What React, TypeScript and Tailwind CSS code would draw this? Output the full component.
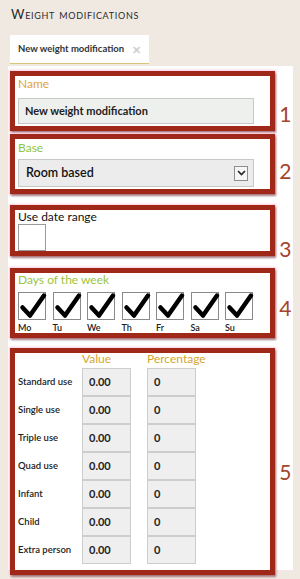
import React from "react";

const boxCls =
  "border-[5px] border-[#a02818] shadow-[1px_2px_2px_rgba(60,0,0,0.45),0_0_2px_1px_#ffc9dc] bg-white";

function Num({ n, mt }: { n: string; mt: string }) {
  return (
    <div className={`w-[14px] ml-[4px] text-[21px] leading-[24px] text-[#a5432c] ${mt}`} style={{ fontFamily: "Lato, sans-serif" }}>
      {n}
    </div>
  );
}

function Check() {
  return (
    <div className="relative w-[28px] h-[28px] border border-[#8a8a8a] bg-white">
      <svg className="absolute left-0 top-0 overflow-visible" width="28" height="28" viewBox="0 0 28 28">
        <path d="M3.5 14.5 L11 22.5 L25 2.5" fill="none" stroke="#000" strokeWidth="4.5" strokeLinecap="round" strokeLinejoin="round" />
      </svg>
    </div>
  );
}

const days = ["Mo", "Tu", "We", "Th", "Fr", "Sa", "Su"];
const rows = ["Standard use", "Single use", "Triple use", "Quad use", "Infant", "Child", "Extra person"];

export default function App() {
  return (
    <div className="w-[300px] h-[579px] bg-[#efe9e2] overflow-hidden" style={{ fontFamily: "Lato, 'Open Sans', sans-serif" }}>
      <div className="pl-[11px] pt-[7px] h-[35px] text-[13px] leading-[14px] text-[#2a2a2a] [font-variant:small-caps] tracking-[0.7px]">
        Weight modifications
      </div>
      <div className="ml-[10px] w-[139px] h-[29px] bg-white border-b border-[#dcc27a] flex items-center pl-[8px] pr-[8px] justify-between">
        <span className="text-[9.5px] font-bold text-[#333]">New weight modification</span>
        <span className="text-[11px] font-bold text-[#d0d0d0] leading-none">✕</span>
      </div>
      <div className="ml-[8px] mt-[2px] w-[285px] h-[504px] bg-white pl-[2px] pt-[5px] flex flex-col">
        {/* Box 1 */}
        <div className="flex items-start">
          <div className={`${boxCls} w-[268px] h-[60px] pl-[3px] pt-[0px]`}>
            <div className="text-[12px] leading-[16px] text-[#e2a23a]">Name</div>
            <div className="mt-[6px] w-[236px] h-[26px] bg-[#eef0ee] border border-[#c8c8c8] flex items-center pl-[6px] text-[11px] font-bold text-[#222]">
              New weight modification
            </div>
          </div>
          <Num n="1" mt="mt-[31px]" />
        </div>
        {/* Box 2 */}
        <div className="flex items-start mt-[3px]">
          <div className={`${boxCls} w-[268px] h-[60px] pl-[3px] pt-[1px]`}>
            <div className="text-[12px] leading-[16px] text-[#8dc63f]">Base</div>
            <div className="mt-[3px] w-[236px] h-[28px] bg-[#ececec] border border-[#c8c8c8] flex items-center justify-between pl-[7px] pr-[5px]">
              <span className="text-[12.5px] font-semibold text-[#111]">Room based</span>
              <span className="w-[14px] h-[15px] border border-[#8e8e8e] bg-[#f6f6f6] flex items-center justify-center">
                <svg width="9" height="6" viewBox="0 0 9 6">
                  <path d="M1 1 L4.5 4.5 L8 1" fill="none" stroke="#222" strokeWidth="1.6" />
                </svg>
              </span>
            </div>
          </div>
          <Num n="2" mt="mt-[25px]" />
        </div>
        {/* Box 3 */}
        <div className="flex items-start mt-[11px]">
          <div className={`${boxCls} w-[268px] h-[51px] pl-[3px]`}>
            <div className="text-[12px] leading-[13px] text-[#111]">Use date range</div>
            <div className="mt-[1px] w-[28px] h-[27px] border border-[#9a9a9a] bg-white" />
          </div>
          <Num n="3" mt="mt-[32px]" />
        </div>
        {/* Box 4 */}
        <div className="flex items-start mt-[7px]">
          <div className={`${boxCls} w-[268px] h-[70px] pl-[3px]`}>
            <div className="text-[12px] leading-[13px] text-[#9cc43c]">Days of the week</div>
            <div className="mt-[6px] flex gap-[6.5px]">
              {days.map((d) => (
                <div key={d} className="flex flex-col">
                  <Check />
                  <div className="mt-[2px] text-[9px] leading-[11px] font-semibold text-[#222]">{d}</div>
                </div>
              ))}
            </div>
          </div>
          <Num n="4" mt="mt-[28px]" />
        </div>
        {/* Box 5 */}
        <div className="flex items-start mt-[10px]">
          <div className={`${boxCls} w-[268px] h-[227px] pl-[3px]`}>
            <div className="flex text-[12px] leading-[14px] text-[#d4a62e] h-[16px] -mt-[1px]">
              <div className="ml-[64px] w-[65px]">Value</div>
              <div>Percentage</div>
            </div>
            <div className="flex flex-col">
              {rows.map((r) => (
                <div key={r} className="flex items-center h-[28px]">
                  <div className="w-[64px] text-[9.5px] font-semibold text-[#222]">{r}</div>
                  <div className="w-[49px] h-[28px] bg-[#efefef] border border-[#cdcdcd] flex items-center pl-[6px] text-[11px] font-bold text-[#222]">
                    0.00
                  </div>
                  <div className="ml-[16px] w-[49px] h-[28px] bg-[#efefef] border border-[#cdcdcd] flex items-center pl-[6px] text-[11px] font-bold text-[#222]">
                    0
                  </div>
                </div>
              ))}
            </div>
          </div>
          <Num n="5" mt="mt-[112px]" />
        </div>
      </div>
    </div>
  );
}
